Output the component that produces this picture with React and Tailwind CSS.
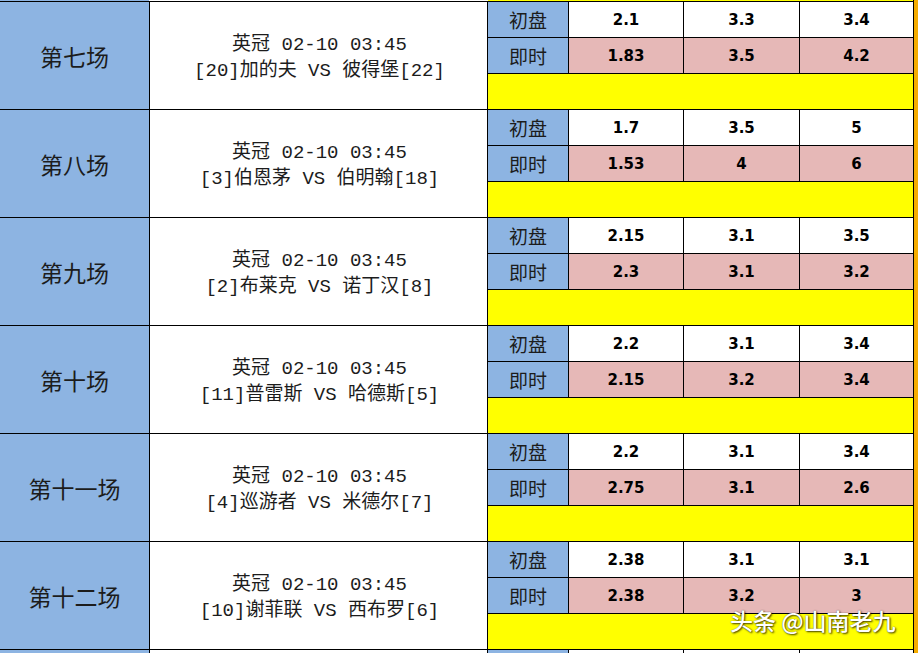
const MATCHES = [
  { no: "第七场", home: "[20]加的夫", away: "彼得堡[22]", init: ["2.1", "3.3", "3.4"], live: ["1.83", "3.5", "4.2"] },
  { no: "第八场", home: "[3]伯恩茅", away: "伯明翰[18]", init: ["1.7", "3.5", "5"], live: ["1.53", "4", "6"] },
  { no: "第九场", home: "[2]布莱克", away: "诺丁汉[8]", init: ["2.15", "3.1", "3.5"], live: ["2.3", "3.1", "3.2"] },
  { no: "第十场", home: "[11]普雷斯", away: "哈德斯[5]", init: ["2.2", "3.1", "3.4"], live: ["2.15", "3.2", "3.4"] },
  { no: "第十一场", home: "[4]巡游者", away: "米德尔[7]", init: ["2.2", "3.1", "3.4"], live: ["2.75", "3.1", "2.6"] },
  { no: "第十二场", home: "[10]谢菲联", away: "西布罗[6]", init: ["2.38", "3.1", "3.1"], live: ["2.38", "3.2", "3"] },
];

const CJK = { fontFamily: '"Noto Sans CJK SC", sans-serif' };
const MATCH = { fontFamily: '"Liberation Mono", "Noto Sans CJK SC", monospace' };
const NUM = { fontFamily: '"DejaVu Sans", Verdana, sans-serif' };
const VAL_W = ["w-[115px] border-r border-black", "w-[116px] border-r border-black", "w-[113px]"];

function OddsLine({ label, values, bg }) {
  return (
    <div className="flex h-[35px]">
      <div className="w-[81px] border-r border-black bg-[#8db4e2] flex items-center justify-center pt-[2px] text-[19px] text-[#1c1c1c]" style={CJK}>
        {label}
      </div>
      {values.map((v, i) => (
        <div key={i} className={`${VAL_W[i]} ${bg} flex items-center justify-center pt-[2px] font-bold text-[15px] text-black`} style={NUM}>
          {v}
        </div>
      ))}
    </div>
  );
}

function MatchRow({ m }) {
  return (
    <div className="flex h-[108px] shrink-0 border-t border-black">
      <div className="w-[150px] border-r border-black bg-[#8db4e2] flex items-center justify-center text-[23px] text-[#1c1c1c] pt-[1px]" style={CJK}>
        {m.no}
      </div>
      <div className="w-[338px] border-r border-black bg-white flex flex-col items-center justify-center text-[19px] leading-[26px] text-[#1c1c1c] pt-[5px]" style={MATCH}>
        <div className="pl-[2px]">英冠 02-10 03:45</div>
        <div className="pl-[2px]">{m.home} VS {m.away}</div>
      </div>
      <div className="w-[425px] flex flex-col">
        <OddsLine label="初盘" values={m.init} bg="bg-white" />
        <div className="border-t border-black">
          <OddsLine label="即时" values={m.live} bg="bg-[#e6b8b7]" />
        </div>
        <div className="h-[36px] border-t border-black bg-[#ffff00]" />
      </div>
    </div>
  );
}

export default function App() {
  return (
    <div className="relative w-[918px] h-[653px] overflow-hidden bg-white flex">
      <div className="w-[913px] flex flex-col">
        <div className="flex h-px shrink-0">
          <div className="w-[149px] bg-[#8db4e2]" />
          <div className="w-[339px] bg-white" />
          <div className="flex-1 bg-[#ffff00]" />
        </div>
        {MATCHES.map((m) => (
          <MatchRow key={m.no} m={m} />
        ))}
        {/* next match row, only its top edge is visible */}
        <div className="flex h-[10px] shrink-0 border-t border-black">
          <div className="w-[150px] border-r border-black bg-[#8db4e2]" />
          <div className="w-[338px] border-r border-black bg-white" />
          <div className="w-[81px] border-r border-black bg-[#8db4e2]" />
          <div className="w-[115px] border-r border-black bg-white" />
          <div className="w-[116px] border-r border-black bg-white" />
          <div className="w-[113px] bg-white" />
        </div>
      </div>
      <div className="w-px bg-black" />
      <div className="w-[4px] bg-[#f5ac00]" />
      <div
        className="absolute left-[730px] top-[603px] text-[23px] font-medium text-white"
        style={{ fontFamily: '"Noto Sans CJK SC", sans-serif', textShadow: "1px 1px 2px rgba(0,0,0,0.75), 0 0 1px rgba(0,0,0,0.6)" }}
      >
        头条 @山南老九
      </div>
    </div>
  );
}
